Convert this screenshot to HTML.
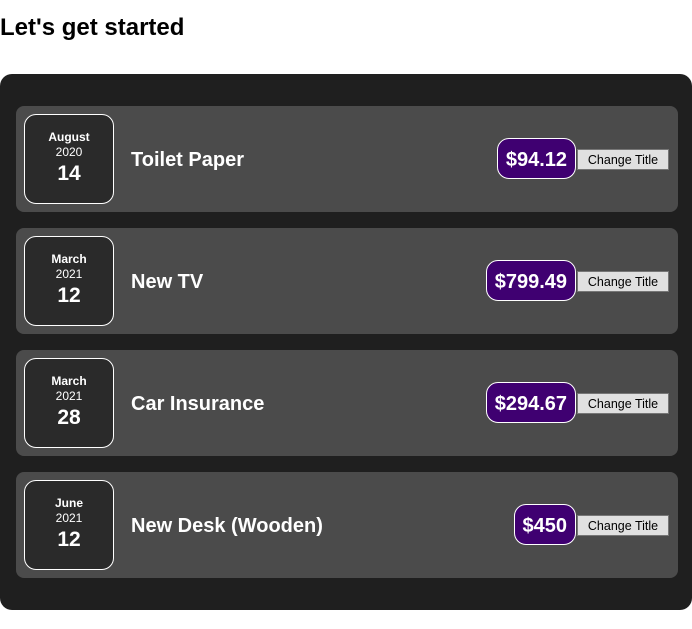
<!DOCTYPE html>
<html><head><style>
body{margin:0;font-family:"Liberation Sans",Arial,sans-serif;background:#fff;width:692px;height:629px;overflow:hidden}
h2{margin:0;position:absolute;left:0;top:13px;font-size:24px;line-height:30px;font-weight:bold;color:#000}
.c{position:absolute;left:0;top:74px;width:692px;height:536px;background:#1f1f1f;border-radius:12px}
.it{position:absolute;left:16px;width:662px;height:106px;background:#4b4b4b;border-radius:8px}
.d{position:absolute;left:8px;top:8px;width:88px;height:88px;border:1px solid #fff;border-radius:12px;background:#2a2a2a;color:#fff;text-align:center}
.m{font-size:12px;font-weight:bold;margin-top:15px;line-height:14px}
.y{font-size:12px;line-height:14px;margin-top:1px}
.dd{font-size:21px;font-weight:bold;line-height:24px;margin-top:3px}
.t{position:absolute;left:115px;top:1px;line-height:106px;color:#fff;font-size:20px;font-weight:bold}
.p{position:absolute;right:102px;top:32px;height:39px;line-height:42px;padding:0 8px;border:1px solid #fff;border-radius:12px;background:#3f0071;color:#fff;font-size:20px;font-weight:bold}
.b{position:absolute;left:561px;top:43px;width:92px;height:21px;box-sizing:border-box;background:#e0e0e0;border:1px solid #767676;font-size:12.5px;text-align:center;line-height:20px;color:#000}
</style></head><body>
<h2>Let's get started</h2>
<div class="c">
<div class="it" style="top:32px"><div class="d"><div class="m">August</div><div class="y">2020</div><div class="dd">14</div></div><div class="t">Toilet Paper</div><div class="p">$94.12</div><div class="b">Change Title</div></div>
<div class="it" style="top:154px"><div class="d"><div class="m">March</div><div class="y">2021</div><div class="dd">12</div></div><div class="t">New TV</div><div class="p">$799.49</div><div class="b">Change Title</div></div>
<div class="it" style="top:276px"><div class="d"><div class="m">March</div><div class="y">2021</div><div class="dd">28</div></div><div class="t">Car Insurance</div><div class="p">$294.67</div><div class="b">Change Title</div></div>
<div class="it" style="top:398px"><div class="d"><div class="m">June</div><div class="y">2021</div><div class="dd">12</div></div><div class="t">New Desk (Wooden)</div><div class="p">$450</div><div class="b">Change Title</div></div>
</div>
</body></html>
